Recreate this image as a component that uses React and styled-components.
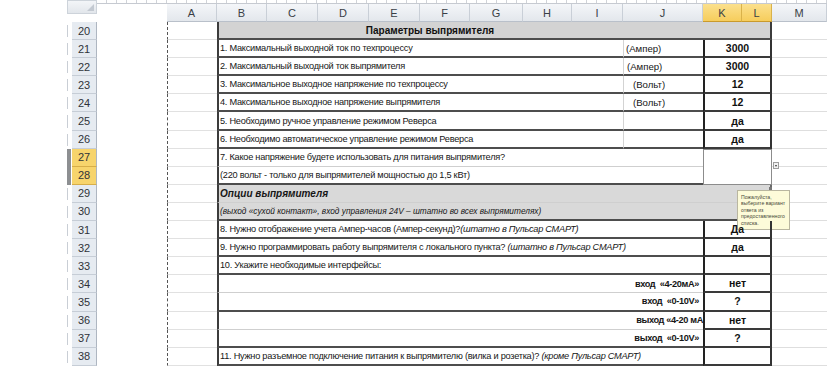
import React from "react";
import styled, { createGlobalStyle, css } from "styled-components";

const Global = createGlobalStyle`
  html, body { margin: 0; padding: 0; background: #fff; }
  body { font-family: "Liberation Sans", Arial, sans-serif; }
`;

const COLS =
  "72px 25px 70px 50px 50px 51px 51px 51px 50px 53px 49px 51px 80px 39px 30px 55px 1fr";

const Sheet = styled.div`
  position: relative;
  width: 840px;
  height: 390px;
  display: grid;
  grid-template-columns: ${COLS};
  grid-template-rows: 4px 18px repeat(19, 18.1px) 1fr;
  font-family: "Liberation Sans", Arial, sans-serif;
  color: #111;
  overflow: hidden;
`;

const Ruler = styled.div`
  grid-column: 3 / 17;
  grid-row: 1;
  border-bottom: 1px solid #b9bec6;
  background: repeating-linear-gradient(
    90deg,
    transparent 0 9px,
    #c5c9cf 9px 10px
  );
  opacity: 0.8;
`;

const Corner = styled.div`
  grid-column: 2 / 3;
  grid-row: 1 / 3;
  margin: 0 0 8px -5px;
  background: linear-gradient(#f3f5f8, #e2e6eb);
  border: 1px solid #cdd3da;
  position: relative;
  &::after {
    content: "";
    position: absolute;
    right: 2px;
    bottom: 2px;
    border-left: 7px solid transparent;
    border-bottom: 7px solid #c3c9d1;
  }
`;

const ColHead = styled.div`
  grid-row: 2;
  grid-column: ${(p) => p.$col};
  display: flex;
  align-items: center;
  justify-content: center;
  font-size: 11px;
  color: #3a3f46;
  background: ${(p) =>
    p.$active
      ? "linear-gradient(#fbe08d, #f6cd5c)"
      : "linear-gradient(#f4f6f9, #e3e7ec)"};
  border-right: 1px solid ${(p) => (p.$active ? "#d9b24a" : "#c9cfd7")};
  border-bottom: 1px solid ${(p) => (p.$active ? "#c99a2c" : "#b9c0ca")};
  box-sizing: border-box;
`;

const RowHead = styled.div`
  grid-column: 2 / 3;
  grid-row: ${(p) => p.$row};
  display: flex;
  align-items: center;
  justify-content: center;
  font-size: 11px;
  color: #2f3339;
  background: ${(p) => (p.$active ? "#f7d46c" : "#e6ebf1")};
  border-bottom: 1px solid ${(p) => (p.$active ? "#d7ae49" : "#c6cdd6")};
  border-right: 1px solid #aeb6c1;
  box-sizing: border-box;
`;

const Gutter = styled.div`
  grid-column: 1 / 2;
  grid-row: ${(p) => p.$row};
  margin-left: 67px;
  ${(p) =>
    p.$active
      ? css`
          background: #8d8f92;
          margin-right: 1px;
        `
      : css`
          border-left: 1px solid #c9ced5;
          margin-top: 3px;
          margin-bottom: 3px;
        `}
`;

const CellA = styled.div`
  grid-column: 4 / 5;
  grid-row: ${(p) => p.$row};
  border-left: 1px dashed #555;
  border-bottom: 1px solid #e1e1e1;
  box-sizing: border-box;
`;

const CellM = styled.div`
  grid-column: 16 / 17;
  grid-row: ${(p) => p.$row};
  border-bottom: 1px solid #dedede;
  box-sizing: border-box;
`;

const lineStyle = (kind) =>
  kind === "dark" ? "2px solid #4d4d4d" : "1px solid #cfcfcf";

const Label = styled.div`
  grid-column: ${(p) => p.$col};
  grid-row: ${(p) => p.$row};
  display: flex;
  align-items: center;
  justify-content: ${(p) => (p.$right ? "flex-end" : "flex-start")};
  padding: ${(p) => (p.$right ? `0 ${p.$pr ?? 4}px 0 0` : "0 0 0 1px")};
  border-left: 2px solid #3c3c3c;
  border-bottom: ${(p) => lineStyle(p.$line)};
  background: ${(p) => (p.$gray ? "#d9d9d9" : "#fff")};
  ${(p) => p.$gray && "border-right: 2px solid #6a6a6a;"}
  box-sizing: border-box;
  font-size: ${(p) => p.$size || 9.2}px;
  letter-spacing: ${(p) => (p.$tight ? p.$tight : 0)}px;
  font-weight: ${(p) => (p.$bold ? 700 : 400)};
  font-style: ${(p) => (p.$italic ? "italic" : "normal")};
  white-space: pre;
  overflow: ${(p) => (p.$clip ? "hidden" : "visible")};
  color: #161616;
  z-index: 1;
`;

const Em = styled.span`
  font-style: italic;
`;

const Unit = styled.div`
  grid-column: 13 / 14;
  grid-row: ${(p) => p.$row};
  display: flex;
  align-items: center;
  padding-left: ${(p) => p.$pad}px;
  border-left: 1px solid #d3d3d3;
  border-bottom: ${(p) => lineStyle(p.$line)};
  box-sizing: border-box;
  font-size: 9.6px;
  white-space: nowrap;
  color: #161616;
`;

const Title = styled.div`
  grid-column: 5 / 16;
  grid-row: 3;
  display: flex;
  align-items: center;
  justify-content: center;
  padding-right: 129px;
  background: #d3d3d3;
  border-left: 2px solid #3c3c3c;
  border-right: 2px solid #3c3c3c;
  border-bottom: 2px solid #4d4d4d;
  box-sizing: border-box;
  font-size: 10px;
  font-weight: 700;
  color: #111;
`;

const Value = styled.div`
  grid-column: 14 / 16;
  grid-row: ${(p) => p.$row};
  display: flex;
  align-items: center;
  justify-content: center;
  box-sizing: border-box;
  font-size: 10.5px;
  font-weight: 700;
  color: #111;
  z-index: 6;
  ${(p) =>
    p.$selected
      ? css`
          border: 1px solid #8c8c8c;
          background: #fff;
        `
      : css`
          border-left: 2px solid #222;
          border-right: 2px solid #333;
          border-bottom: 2px solid #3a3a3a;
        `}
`;

const Tip = styled.div`
  position: absolute;
  left: 737px;
  top: 190px;
  width: 53px;
  height: 40px;
  box-sizing: border-box;
  padding: 3px 2px 0 3px;
  background: #fdfbd9;
  border: 1px solid #b9b6a0;
  font-size: 5.2px;
  line-height: 6.4px;
  color: #4a4a3a;
  z-index: 5;
`;

const DropBtn = styled.div`
  position: absolute;
  left: 773px;
  top: 162px;
  width: 6px;
  height: 7px;
  box-sizing: border-box;
  border: 1px solid #9d9d9d;
  background: #f1f1f1;
  z-index: 5;
  &::after {
    content: "";
    position: absolute;
    left: 1px;
    top: 2px;
    border-left: 1.5px solid transparent;
    border-right: 1.5px solid transparent;
    border-top: 2px solid #333;
  }
`;

const Handle = styled.div`
  position: absolute;
  left: 769px;
  top: 187px;
  width: 3px;
  height: 3px;
  background: #777;
  z-index: 7;
`;

const rows = [
  { n: 21, text: "1. Максимальный выходной ток по техпроцессу", unit: "(Ампер)", pad: 2, value: "3000", line: "dark" },
  { n: 22, text: "2. Максимальный выходной ток выпрямителя", unit: "(Ампер)", pad: 3, value: "3000", line: "dark" },
  { n: 23, text: "3. Максимальное выходное напряжение по техпроцессу", unit: "(Вольт)", pad: 9, value: "12", line: "dark" },
  { n: 24, text: "4. Максимальное выходное напряжение выпрямителя", unit: "(Вольт)", pad: 9, value: "12", line: "dark" },
  { n: 25, text: "5. Необходимо ручное управление режимом Реверса", unit: "", value: "да", line: "dark" },
  { n: 26, text: "6. Необходимо автоматическое управление режимом Реверса", unit: "", value: "да", line: "dark" },
  { n: 27, text: "7. Какое напряжение будете использовать для питания выпрямителя?", line: "light", wide: true },
  { n: 28, text: "(220 вольт - только для выпрямителей мощностью до 1,5 кВт)", line: "dark", wide: true },
  { n: 29, text: "Опции выпрямителя", line: "light", wide: true, gray: true, bold: true, italic: true, size: 10, tight: 0 },
  { n: 30, text: "(выход «сухой контакт», вход управления 24V – штатно во всех выпрямителях)", line: "dark", wide: true, gray: true, italic: true, size: 8.3, tight: 0 },
  { n: 31, text: "8. Нужно отображение учета Ампер-часов (Ампер-секунд)?", em: "(штатно в Пульсар СМАРТ)", value: "Да", line: "dark", wide: true },
  { n: 32, text: "9. Нужно программировать работу выпрямителя с локального пункта? ", em: "(штатно в Пульсар СМАРТ)", value: "да", line: "dark", wide: true },
  { n: 33, text: "10. Укажите необходимые интерфейсы:", value: "", line: "dark", wide: true },
  { n: 34, text: "вход  «4-20мА»", right: true, value: "нет", line: "light", wide: true },
  { n: 35, text: "вход  «0-10V»", right: true, value: "?", line: "dark", wide: true },
  { n: 36, text: "выход «4-20 мА", right: true, pr: 0, value: "нет", line: "light", wide: true, clip: true },
  { n: 37, text: "выход  «0-10V»", right: true, value: "?", line: "dark", wide: true },
  { n: 38, text: "11. Нужно разъемное подключение питания к выпрямителю (вилка и розетка)? ", em: "(кроме Пульсар СМАРТ)", value: "", line: "dark", wide: true },
];

const letters = ["A", "B", "C", "D", "E", "F", "G", "H", "I", "J", "K", "L", "M"];

export default function App() {
  const all = [20, ...rows.map((r) => r.n)];
  return (
    <>
      <Global />
      <Sheet>
        <Ruler />
        <Corner />
        {letters.map((l, i) => (
          <ColHead key={l} $col={`${i + 4} / ${i + 5}`} $active={l === "K" || l === "L"}>
            {l}
          </ColHead>
        ))}
        {all.map((n) => {
          const gr = n - 17;
          const active = n === 27 || n === 28;
          return (
            <React.Fragment key={`f${n}`}>
              <Gutter $row={gr} $active={active} />
              <RowHead $row={gr} $active={active}>
                {n}
              </RowHead>
              <CellA $row={gr} />
              <CellM $row={gr} />
            </React.Fragment>
          );
        })}
        <Title>Параметры выпрямителя</Title>
        {rows.map((r) => {
          const gr = r.n - 17;
          const hasUnit = !r.wide;
          const fullSpan = r.gray ? "5 / 16" : hasUnit ? "5 / 13" : "5 / 14";
          return (
            <React.Fragment key={r.n}>
              <Label
                $row={gr}
                $col={fullSpan}
                $line={r.line}
                $gray={r.gray}
                $bold={r.bold || r.right}
                $italic={r.italic}
                $size={r.size}
                $tight={r.tight ?? (r.right ? -0.35 : -0.25)}
                $right={r.right}
                $pr={r.pr}
                $clip={r.clip}
              >
                {r.text}
                {r.em && <Em>{r.em}</Em>}
              </Label>
              {hasUnit && (
                <Unit $row={gr} $pad={r.pad || 0} $line={r.line}>
                  {r.unit}
                </Unit>
              )}
              {r.value !== undefined && <Value $row={gr}>{r.value}</Value>}
            </React.Fragment>
          );
        })}
        <Value $row="10 / 12" $selected />
        <DropBtn />
        <Handle />
        <Tip>
          Пожалуйста,
          <br />
          выберите вариант
          <br />
          ответа из
          <br />
          предоставленного
          <br />
          списка.
        </Tip>
      </Sheet>
    </>
  );
}
